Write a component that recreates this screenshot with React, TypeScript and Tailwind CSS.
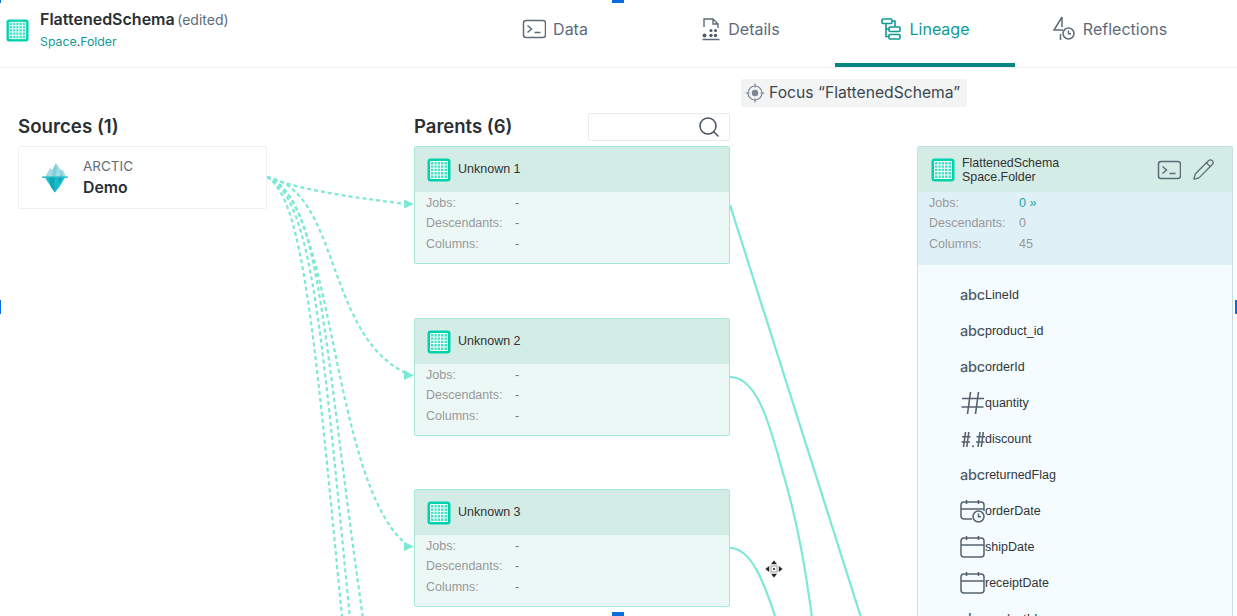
import React from "react";
import { Pencil, Search } from "lucide-react";

function TableIcon({ size = 24 }: { size?: number }) {
  const lines = [3.5, 7, 10.25, 13.5, 17, 20.5];
  return (
    <svg width={size} height={size} viewBox="0 0 24 24" className="shrink-0">
      <rect x="0.5" y="0.5" width="23" height="23" rx="3" fill="#00d2ae" />
      <rect x="3.5" y="3.5" width="17" height="17" fill="#45e0c4" />
      {lines.map((p) => (
        <React.Fragment key={p}>
          <line x1={p} y1="3.5" x2={p} y2="20.5" stroke="#f2fffc" strokeWidth="1" />
          <line x1="3.5" y1={p} x2="20.5" y2={p} stroke="#f2fffc" strokeWidth="1" />
        </React.Fragment>
      ))}
    </svg>
  );
}

function TerminalIcon({ className = "" }: { className?: string }) {
  return (
    <svg width="24" height="20" viewBox="0 0 24 20" fill="none" stroke="#5d6b78" strokeWidth="1.5" className={className}>
      <rect x="1.5" y="1.5" width="22" height="17" rx="2.5" />
      <path d="M5.500 6.500l4 3.500-4 3.500M12.500 13.500h6" />
    </svg>
  );
}

function DetailsIcon() {
  return (
    <svg width="20" height="24" viewBox="0 0 20 24" fill="none" stroke="#5d6b78" strokeWidth="1.4" className="ml-[1px]">
      <path d="M3 10V2h9l5 5v4M12 2v5h5M1.500 22.500h17" />
      <g fill="#4f5c69" stroke="none">
        <circle cx="3.500" cy="18.500" r="1.900" />
        <circle cx="10" cy="13.500" r="1.500" />
        <circle cx="14.500" cy="13.500" r="1.500" />
        <circle cx="10" cy="18.500" r="1.700" />
        <circle cx="14.500" cy="18.500" r="1.700" />
      </g>
    </svg>
  );
}

function LineageIcon() {
  return (
    <svg width="22" height="22" viewBox="0 0 22 22" fill="none" stroke="#0f9a96" strokeWidth="1.6">
      <rect x="1" y="1" width="10" height="4.500" rx="1" />
      <rect x="8" y="9" width="11" height="4.500" rx="1" />
      <rect x="8" y="16.500" width="11" height="4.500" rx="1" />
      <path d="M5 5.500v13h3M5 11h3M11 3h3v6" />
    </svg>
  );
}

function ReflectionsIcon() {
  return (
    <svg width="23" height="25" viewBox="0 0 23 25" fill="none" stroke="#5d6b78" strokeWidth="1.5">
      <path d="M9 1L1 14h9M9 1v10M7.500 18v6" />
      <circle cx="15.500" cy="17.500" r="5.500" />
      <path d="M15.500 14.500v3.200h2.500" />
    </svg>
  );
}

function FocusIcon() {
  return (
    <svg width="20" height="20" viewBox="0 0 20 20" fill="none" stroke="#7d8894" strokeWidth="1.2" className="shrink-0">
      <circle cx="10" cy="10" r="7" />
      <circle cx="10" cy="10" r="3.200" fill="#7d8894" stroke="none" />
      <path d="M10 0.500v4M10 15.500v4M0.500 10h4M15.500 10h4" />
    </svg>
  );
}

function ArcticIcon() {
  return (
    <svg width="26" height="31" viewBox="0 0 26 31" className="shrink-0">
      <path d="M3 15L8 6l2.500 2L14 1l5 7 2 0 3 7z" fill="#a6dde4" />
      <path d="M10.500 8L14 1l1 7-2 7h-3zM19 8l2.500 7h-4z" fill="#7ecfd8" />
      <path d="M3 15.500h20l-5 8.500-5 6.500-4-5.500z" fill="#18bccb" />
      <path d="M7 15.500h6l-1 7.500 1 7.500-4-5.500zM16 15.500h4l-3 6z" fill="#0ba7b6" />
      <rect x="0" y="14.500" width="26" height="1.300" fill="#0fb5c4" />
    </svg>
  );
}

function HashIcon() {
  return (
    <svg width="24" height="24" viewBox="0 0 24 24" fill="none" stroke="#54626f" strokeWidth="1.6" className="shrink-0">
      <path d="M9.500 1L6.500 23M17.500 1L14.500 23M1 7.500h22M0.500 16h22" />
    </svg>
  );
}

function DoubleHashIcon() {
  return (
    <svg width="24" height="20" viewBox="0 0 24 20" fill="none" stroke="#54626f" strokeWidth="1.6" className="shrink-0">
      <path d="M4.500 3L2.500 18M7.800 3L5.800 18M1 7.800h8.500M0.500 13h8.500M19 3L17 18M22.300 3L20.300 18M15.500 7.800h8.500M15 13h8.500" />
      <circle cx="12" cy="17.200" r="1" fill="#54626f" stroke="none" />
    </svg>
  );
}

function AbcIcon() {
  return (
    <span className="w-[25px] shrink-0 text-[14.500px] leading-none font-medium font-['Inter',sans-serif] text-[#4f5d6a] tracking-[-0.2px]">
      abc
    </span>
  );
}

function CalendarIcon({ clock = false }: { clock?: boolean }) {
  return (
    <svg width="25" height="24" viewBox="0 0 25 24" fill="none" stroke="#54626f" strokeWidth="1.5" className="shrink-0">
      <path
        d={
          clock
            ? "M12 20H4a3 3 0 0 1-3-3V6a3 3 0 0 1 3-3h17a3 3 0 0 1 3 3v6M1 10h23M6.500 1v4M18.500 1v4"
            : "M4 3h17a3 3 0 0 1 3 3v13a3 3 0 0 1-3 3H4a3 3 0 0 1-3-3V6a3 3 0 0 1 3-3zM1 10h23M6.500 1v4M18.500 1v4"
        }
      />
      {clock && (
        <>
          <circle cx="18.500" cy="17.500" r="5.500" fill="#f4fcff" />
          <path d="M18.500 14.500v3.200h2.500" />
        </>
      )}
    </svg>
  );
}

function Stats({ jobs, desc, cols, link = false }: { jobs: string; desc: string; cols: string; link?: boolean }) {
  const rows: [string, string][] = [
    ["Jobs:", jobs],
    ["Descendants:", desc],
    ["Columns:", cols],
  ];
  return (
    <div className="flex flex-col pl-[11px] pt-[0.75px] text-[12.5px] leading-[20.5px] text-[#999]">
      {rows.map(([label, value], i) => (
        <div key={label} className="flex">
          <span className={value === "-" ? "w-[89px]" : "w-[90px]"}>{label}</span>
          <span className={link && i === 0 ? "text-[#1aa6a6]" : value === "-" ? "text-[#777]" : "text-[#999]"}>{value}</span>
        </div>
      ))}
    </div>
  );
}

function ParentNode({ name, top }: { name: string; top: number }) {
  return (
    <div
      className="absolute left-[414px] w-[316px] h-[118px] rounded-[2px] border border-[#a5e8da] bg-[#ecf8f6] font-['Liberation_Sans',sans-serif] overflow-hidden"
      style={{ top }}
    >
      <div className="h-[45px] bg-[#d4ece6] flex items-center pl-[12px] gap-[7px] text-[12.5px] text-[#333]">
        <TableIcon />
        <span>{name}</span>
      </div>
      <Stats jobs="-" desc="-" cols="-" />
    </div>
  );
}

const columns: [string, React.ReactNode][] = [
  ["LineId", <AbcIcon />],
  ["product_id", <AbcIcon />],
  ["orderId", <AbcIcon />],
  ["quantity", <HashIcon />],
  ["discount", <DoubleHashIcon />],
  ["returnedFlag", <AbcIcon />],
  ["orderDate", <CalendarIcon clock />],
  ["shipDate", <CalendarIcon />],
  ["receiptDate", <CalendarIcon />],
  ["productId", <AbcIcon />],
];

function Tab({ label, icon, active = false }: { label: string; icon: React.ReactNode; active?: boolean }) {
  return (
    <div
      className={`w-[180px] h-[67px] flex items-center justify-center gap-[7px] pb-[6px] text-[16px] border-b-[4px] ${
        active ? "border-[#07857f] text-[#0f9a96]" : "border-transparent text-[#5d6b78]"
      }`}
    >
      {icon}
      <span>{label}</span>
    </div>
  );
}

export default function App() {
  return (
    <div className="relative w-[1237px] h-[616px] overflow-hidden bg-white font-['Inter',sans-serif] text-[#333]">
      <header className="h-[68px] border-b border-[#f0f1f2] flex justify-between">
        <div className="flex items-center gap-[11px] pl-[6px] pb-[8px]">
          <div className="mt-[1px]">
            <TableIcon size={23} />
          </div>
          <div className="flex flex-col gap-[4px] -mt-[1px]">
            <div className="leading-[20px] whitespace-nowrap">
              <span className="text-[16px] font-semibold text-[#2a2f33]">FlattenedSchema</span>{" "}
              <span className="text-[14px] text-[#5d6b78] -ml-[2px]">(edited)</span>
            </div>
            <div className="text-[12.3px] leading-[16px] text-[#129a96]">
              Space<span className="text-[#333]">.</span>Folder
            </div>
          </div>
        </div>
        <nav className="flex gap-[5px] mr-[37px]">
          <Tab label="Data" icon={<TerminalIcon />} />
          <Tab label="Details" icon={<DetailsIcon />} />
          <Tab label="Lineage" icon={<LineageIcon />} active />
          <Tab label="Reflections" icon={<ReflectionsIcon />} />
        </nav>
      </header>

      <div className="absolute left-[741px] top-[79px] w-[226px] h-[28px] bg-[#f3f4f4] rounded-[2px] flex items-center gap-[4px] pl-[4px] text-[15.700px] text-[#3d4750] whitespace-nowrap">
        <FocusIcon />
        <span>Focus “FlattenedSchema”</span>
      </div>

      <svg className="absolute left-0 top-0" width="1237" height="616" fill="none" stroke="#7de8d5" strokeWidth="2.2">
        <g strokeDasharray="4 3">
          <path d="M267 177C300 190 350 197 406 204" />
          <path d="M267 177C340 190 325 335 406 373" />
          <path d="M267 177C335 200 330 480 406 544" />
          <path d="M267 177C325 200 320 340 375 700" />
          <path d="M267 177C315 200 322 340 358 700" />
          <path d="M267 177C305 200 315 340 350 700" />
        </g>
        <g fill="#7de8d5" stroke="none">
          <path d="M414 204L404 199.500v9z" />
          <path d="M414 375.500L404 370v10z" />
          <path d="M414 546.500L404 542v9z" />
        </g>
        <path d="M730 205L865 630" />
        <path d="M730 377C760 377 772 435 785 480S806 570 815 640" />
        <path d="M730 548C752 548 765 585 777 622" />
      </svg>

      <h2 className="absolute left-[18px] top-[116px] text-[18.700px] leading-[22px] font-semibold text-[#2a2f33]">Sources (1)</h2>
      <div className="absolute left-[18px] top-[146px] w-[249px] h-[63px] rounded-[2px] border border-[#eef0f1] bg-white flex items-center gap-[15px] pl-[23px]">
        <ArcticIcon />
        <div className="flex flex-col gap-[3px] pb-[1px]">
          <span className="text-[13.500px] leading-[18px] text-[#626e7a]">ARCTIC</span>
          <span className="text-[15.800px] leading-[20px] font-semibold text-[#2a2f33]">Demo</span>
        </div>
      </div>

      <h2 className="absolute left-[414px] top-[115px] text-[18.500px] leading-[22px] font-semibold text-[#2a2f33]">Parents (6)</h2>
      <div className="absolute left-[588px] top-[113px] w-[142px] h-[28px] rounded-[2px] border border-[#e9ebec] bg-white flex items-center justify-end pr-[8px]">
        <Search size={24} strokeWidth={1.5} color="#46525e" />
      </div>

      <ParentNode name="Unknown 1" top={146} />
      <ParentNode name="Unknown 2" top={318} />
      <ParentNode name="Unknown 3" top={489} />

      <div className="absolute left-[917px] top-[146px] w-[316px] h-[480px] rounded-t-[2px] border border-[#c5dfe4] bg-[#f4fcff] font-['Liberation_Sans',sans-serif]">
        <div className="h-[45px] bg-[#d4ece6] flex items-center pl-[13px] pr-[17px]">
          <TableIcon />
          <div className="ml-[7px] mt-[1px] flex-1 text-[12.400px] leading-[14px] text-[#333]">
            <div>FlattenedSchema</div>
            <div>Space.Folder</div>
          </div>
          <TerminalIcon />
          <Pencil size={23} strokeWidth={1.3} color="#5d6b78" className="ml-[11px]" />
        </div>
        <div className="h-[73px] bg-[#e0f0f7]">
          <Stats jobs="0 »" desc="0" cols="45" link />
        </div>
        <div className="pt-[12px] pl-[42px]">
          {columns.map(([name, icon]) => (
            <div key={name} className="h-[36px] flex items-center text-[12.500px] text-[#333]">
              <span className="w-[25px] flex justify-center shrink-0">{icon}</span>
              <span>{name}</span>
            </div>
          ))}
        </div>
      </div>

      <svg className="absolute left-[764px] top-[559px]" width="20" height="20" viewBox="0 0 20 20">
        <path d="M10 1l3.500 4.500h-7zM10 19l-3.500-4.500h7zM1 10l4.500-3.500v7zM19 10l-4.500 3.500v-7z" fill="#222" stroke="#fff" strokeWidth="0.6" />
        <rect x="7" y="7" width="6" height="6" fill="#fff" stroke="#888" strokeWidth="0.8" />
        <rect x="9" y="9" width="2" height="2" fill="#555" />
      </svg>

      <div className="absolute left-[612px] top-0 w-[12px] h-[3px] bg-[#0a6ee0]" />
      <div className="absolute left-[612px] bottom-0 w-[12px] h-[4px] bg-[#0a6ee0]" />
      <div className="absolute left-0 top-[300px] w-[1px] h-[14px] bg-[#0a6ee0]" />
      <div className="absolute left-[1235px] top-[300px] w-[2px] h-[14px] bg-[#0a6ee0]" />
      <div className="absolute left-0 top-0 w-[1px] h-[3px] bg-[#0a6ee0]" />
    </div>
  );
}
